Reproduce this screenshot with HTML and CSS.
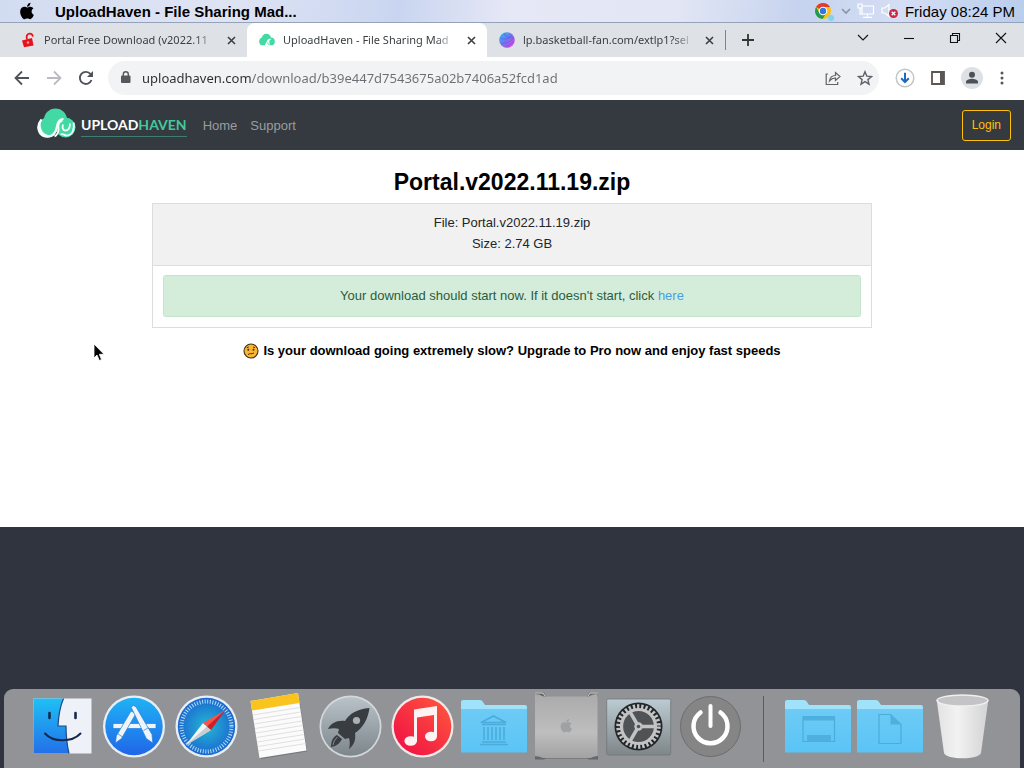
FILE: index.html
```html
<!DOCTYPE html>
<html lang="en">
<head>
<meta charset="utf-8">
<meta name="viewport" content="width=device-width, initial-scale=1">
<title>UploadHaven - File Sharing Made Easy</title>
<link rel="stylesheet" href="styles.css">
</head>
<body>
<header class="menubar">
  <button class="apple" aria-label="System menu"><svg width="14" height="18" viewBox="0 20 384 470"><path d="M318.7 268.7c-.2-36.7 16.4-64.4 50-84.8-18.8-26.9-47.2-41.7-84.7-44.6-35.5-2.8-74.3 20.7-88.5 20.7-15 0-49.4-19.7-76.4-19.7C63.3 141.2 4 184.8 4 273.5q0 39.3 14.4 81.2c12.8 36.7 59 126.7 107.2 125.2 25.2-.6 43-17.9 75.8-17.9 31.8 0 48.3 17.9 76.4 17.9 48.6-.7 90.4-82.5 102.6-119.3-65.2-30.7-61.7-90-61.7-91.9zm-56.6-164.2c27.3-32.4 24.8-61.9 24-72.5-24.1 1.4-52 16.4-67.9 34.9-17.5 19.8-27.8 44.3-25.6 71.9 26.1 2 49.9-11.4 69.5-34.3z"/></svg></button>
  <span class="app-name">UploadHaven - File Sharing Mad...</span>
  <div class="tray">
    <svg width="20" height="20" viewBox="0 0 20 20"><circle cx="8" cy="10" r="8" fill="#fbc116"/><path d="M8 10 1.100 6A8 8 0 0 1 15 6H8z" fill="#e33b2e"/><path d="M1.100 6A8 8 0 0 0 7.600 18l3.800-6-6.800.2z" fill="#229a4f"/><circle cx="8" cy="10" r="4.300" fill="#fff"/><circle cx="8" cy="10" r="3.200" fill="#2f78e0"/><circle cx="16" cy="17" r="3" fill="#7fd3ea"/></svg>
    <svg width="10" height="8" viewBox="0 0 10 8" fill="none" stroke="#8c93a5" stroke-width="1.6"><path d="m1 2 4 4 4-4"/></svg>
    <svg width="18" height="16" viewBox="0 0 18 16" fill="none" stroke="#fff" stroke-width="1.2"><path d="M5 3h11.5v8H5zM10.500 11v3M6 14.300h9M1 1h4v4H1zM3 5v6h2"/></svg>
    <svg width="18" height="16" viewBox="0 0 18 16"><path d="M1 5h3l4-3.500v12L4 10H1z" fill="none" stroke="#fff" stroke-width="1.200"/><circle cx="12.500" cy="10.500" r="4.500" fill="#cc2640"/><path d="m10.700 8.700 3.600 3.600m0-3.600-3.600 3.600" stroke="#fff" stroke-width="1.300"/></svg>
    <time class="clock">Friday 08:24 PM</time>
  </div>
</header>

<div class="tabstrip">
  <div class="tab">
    <svg width="16" height="16" viewBox="0 0 16 16"><path d="M2 8.500 12 6l1.500 7.500L4 15.200z" fill="#e6121c"/><path d="M7 7.500C6 4 7 1.800 9.500 1.600s3.200 1.600 3.400 3" fill="none" stroke="#e6121c" stroke-width="1.800"/><circle cx="8" cy="10.500" r="1.200" fill="#ff9a9a"/></svg>
    <button class="tab-title">Portal Free Download (v2022.11</button>
    <button class="tab-close" aria-label="Close tab"><svg width="9" height="9" viewBox="0 0 9 9"><path d="m1 1 7 7m0-7L1 8"/></svg></button>
  </div>
  <div class="tab active">
    <svg width="16" height="16" viewBox="0 0 39 31"><circle cx="18" cy="12" r="11.500" fill="#42d9a4"/><circle cx="10" cy="19" r="9.500" fill="#42d9a4"/><circle cx="29" cy="19" r="9.500" fill="#42d9a4"/><path d="M15 27c6-1 4-14 11-13-4 2-2 9-1 13" fill="none" stroke="#fff" stroke-width="3"/></svg>
    <button class="tab-title">UploadHaven - File Sharing Mad</button>
    <button class="tab-close" aria-label="Close tab"><svg width="9" height="9" viewBox="0 0 9 9"><path d="m1 1 7 7m0-7L1 8"/></svg></button>
  </div>
  <div class="tab">
    <svg width="16" height="16" viewBox="0 0 16 16"><defs><linearGradient id="ball" x1="0" x2="1" y1="0" y2="1"><stop stop-color="#19c4f4"/><stop offset=".5" stop-color="#7773ee"/><stop offset="1" stop-color="#fc35dc"/></linearGradient></defs><circle cx="8" cy="8" r="7.800" fill="url(#ball)"/><path d="M1 6c5 2 9 1 12-3M2 11c5 1 9-1 13-5M6 15c3-1 6-3 9-6M5 1c0 3 5 5 10 5" fill="none" stroke="#5a58e0" stroke-width=".6"/></svg>
    <button class="tab-title">lp.basketball-fan.com/extlp1?sel</button>
    <button class="tab-close" aria-label="Close tab"><svg width="9" height="9" viewBox="0 0 9 9"><path d="m1 1 7 7m0-7L1 8"/></svg></button>
  </div>
  <span class="tab-rule"></span>
  <button class="new-tab" aria-label="New tab"><svg width="12" height="12" viewBox="0 0 12 12"><path d="M6 0v12M0 6h12" stroke="#333" stroke-width="1.800"/></svg></button>
  <div class="window-controls">
    <button aria-label="Search tabs"><svg width="12" height="12" viewBox="0 0 12 12"><path d="m1 3 5 5 5-5"/></svg></button>
    <button aria-label="Minimize"><svg width="12" height="12" viewBox="0 0 12 12"><path d="M1 6.500h10"/></svg></button>
    <button aria-label="Restore"><svg width="12" height="12" viewBox="0 0 12 12"><path d="M1.500 3.500h7v7h-7zM3.500 3.500v-2h7v7h-2"/></svg></button>
    <button aria-label="Close window"><svg width="12" height="12" viewBox="0 0 12 12"><path d="m1 1 10 10M11 1 1 11"/></svg></button>
  </div>
</div>

<div class="toolbar">
  <button aria-label="Back"><svg width="16" height="16" viewBox="0 0 16 16" fill="none" stroke="#50545a" stroke-width="1.800"><path d="M15 8H2M8 1.500 1.500 8 8 14.500"/></svg></button>
  <button aria-label="Forward"><svg width="16" height="16" viewBox="0 0 16 16" fill="none" stroke="#b9bbbe" stroke-width="1.800"><path d="M1 8h13M8 1.500 14.500 8 8 14.500"/></svg></button>
  <button aria-label="Reload"><svg width="16" height="16" viewBox="0 0 16 16"><path d="M13.500 10A6 6 0 1 1 12.600 4.200L14 5.700" fill="none" stroke="#50545a" stroke-width="1.900"/><path d="M15 1v6H9z" fill="#50545a"/></svg></button>
  <div class="omnibox">
    <svg width="10" height="13" viewBox="0 0 10 13"><rect y="4.500" width="9.500" height="7.500" rx="1" fill="#55585d"/><path d="M2.300 5V3.300a2.500 2.500 0 0 1 5 0V5" fill="none" stroke="#55585d" stroke-width="1.400"/></svg>
    <input class="url" type="text" aria-label="Address" value="uploadhaven.com/download/b39e447d7543675a02b7406a52fcd1ad">
    <button aria-label="Share"><svg width="16" height="16" viewBox="0 0 16 16" fill="none" stroke="#5f6368" stroke-width="1.200"><path d="M3 4H1.200v10.500h11.500V12M4.500 11c.5-4 2.500-5.500 6-5.500V2.500L15 6.500l-4.500 4V8c-2.800 0-4.500 1-6 3z"/></svg></button>
    <button aria-label="Bookmark"><svg width="16" height="16" viewBox="0 0 16 16" fill="none" stroke="#5f6368" stroke-width="1.400"><path d="m8 1.700 1.800 4.400 4.700.4-3.600 3.100 1.100 4.600L8 11.700l-4 2.500 1.100-4.600-3.600-3.100 4.700-.4z"/></svg></button>
  </div>
  <button aria-label="Downloads"><svg width="20" height="20" viewBox="0 0 20 20"><circle cx="10" cy="10" r="8.800" fill="#fff" stroke="#c3c5c9" stroke-width="1.500"/><path d="M10 4.800v9M6.200 10.200 10 14l3.800-3.800" fill="none" stroke="#2167be" stroke-width="2"/></svg></button>
  <button aria-label="Side panel"><svg width="14" height="14" viewBox="0 0 14 14"><path d="M1 1h12v12H1z" fill="none" stroke="#5b5653" stroke-width="1.800"/><path d="M9 1h4v12H9z" fill="#5b5653"/></svg></button>
  <button aria-label="Profile"><svg width="22" height="22" viewBox="0 0 22 22"><circle cx="11" cy="11" r="11" fill="#dde1e6"/><circle cx="11" cy="7.700" r="3" fill="#4d5258"/><path d="M5 16.500v-1.700c0-2 4-3 6-3s6 1 6 3v1.700z" fill="#4d5258"/></svg></button>
  <button aria-label="Browser menu"><svg width="6" height="14" viewBox="0 0 6 14" fill="#5b5653"><circle cx="3" cy="2" r="1.500"/><circle cx="3" cy="7" r="1.500"/><circle cx="3" cy="12" r="1.500"/></svg></button>
</div>

<nav class="site-nav">
  <a class="brand" href="#">
    <svg width="39" height="31" viewBox="0 0 39 31"><circle cx="18.500" cy="12" r="11.500" fill="#42d9a4"/><circle cx="10.500" cy="19.500" r="10" fill="#42d9a4"/><circle cx="28.500" cy="19.500" r="10" fill="#42d9a4"/><path d="M4.500 11.500C-1 18 1 28.500 10.500 28.500c7.500 0 9-7 9.500-10 .6-4 2-7.500 6.500-7.500" fill="none" stroke="#f4fffb" stroke-width="2.200"/><path d="M4.500 11.500C-2 17 0 29.500 10.500 29.500c4 0 6-1.500 7.500-3.500-9 4-17-3-13.500-14.500z" fill="#f4fffb"/><path d="M25.500 12.500c-4 1.500-4.500 5-4 8 .4 3-1 6-4 8M26 16.500c-.8 3-.5 6 2.500 6s4.500-2.500 4.500-7M36.500 14.500c1.500 7-1.500 13-7 13-3 0-3-2.500-6-1" fill="none" stroke="#f4fffb" stroke-width="1.800"/></svg>
    <span class="wordmark">UPLOAD<span class="haven">HAVEN</span></span>
  </a>
  <a class="nav-link" href="#">Home</a>
  <a class="nav-link" href="#">Support</a>
  <a class="login" href="#">Login</a>
</nav>

<main class="page">
  <h1>Portal.v2022.11.19.zip</h1>
  <section class="card">
    <div class="card-head">
      <div>File: Portal.v2022.11.19.zip</div>
      <div>Size: 2.74 GB</div>
    </div>
    <div class="card-body">
      <div class="alert">Your download should start now. If it doesn't start, click <a href="#">here</a></div>
    </div>
  </section>
  <p class="upsell">
    <svg width="16" height="16" viewBox="0 0 16 16"><circle cx="8" cy="8" r="7" fill="#fbb62e" stroke="#40301b" stroke-width="1.100"/><circle cx="5.300" cy="6.800" r="1" fill="#40301b"/><circle cx="10.500" cy="6.800" r="1" fill="#40301b"/><path d="M5 11.700c1.500-2 3.500-.2 6-1.700M3.800 4.700l2-.7M10 4l2 .7" fill="none" stroke="#40301b"/></svg>
    Is your download going extremely slow? Upgrade to Pro now and enjoy fast speeds
  </p>
</main>

<section class="desktop">
  <div class="dock">
    <button aria-label="Finder"><svg viewBox="0 0 72 79"><defs><linearGradient id="fin" x2="0" y2="1"><stop stop-color="#1fc0f5"/><stop offset="1" stop-color="#2270e8"/></linearGradient></defs><path d="M7.500 9.500h58v55h-58z" fill="#eef2f8"/><path d="M7.500 9.500h30c-3 7-5 17-5.500 27.500h8c0 9 1 19 3 27.500H7.500z" fill="url(#fin)"/><path d="M37.500 9.500c-3 7-5 17-5.500 27.500h8c0 9 1 19 3 27.500" fill="none" stroke="#1b4a86" stroke-width="1.200"/><path d="M23.500 24v5M49.500 24v5" stroke="#14284a" stroke-width="2.600" stroke-linecap="round"/><path d="M19 44.500c8 9 27 9 35.500 0" fill="none" stroke="#14284a" stroke-width="2" stroke-linecap="round"/></svg></button>
    <button aria-label="App Store"><svg viewBox="0 0 72 79"><defs><linearGradient id="app" x2="0" y2="1"><stop stop-color="#1fb2f5"/><stop offset="1" stop-color="#2066e8"/></linearGradient></defs><circle cx="36" cy="37.500" r="31" fill="#e8eef5"/><circle cx="36" cy="37.500" r="28.700" fill="url(#app)"/><g fill="#eef4fa" stroke="#1c7fdc" stroke-width=".7"><path d="M15 34.500h43v5H15z"/><path d="m33 22 5 2.500-14.500 25-6 4.500.8-7z"/><path d="m33 18 2.500-1.500 2.500 1.300 16 27.700.8 8.500-6.500-4.500z"/><path d="m45.500 41.500 5-2.800M20 45l4.700 3"/></g></svg></button>
    <button aria-label="Safari"><svg viewBox="0 0 72 79"><defs><radialGradient id="saf"><stop stop-color="#24b8d4"/><stop offset="1" stop-color="#1b68cf"/></radialGradient></defs><circle cx="36.500" cy="37.500" r="31" fill="#e8eef5"/><circle cx="36.500" cy="37.500" r="28.700" fill="url(#saf)"/><circle cx="36.500" cy="37.500" r="25" fill="none" stroke="#b5dcf5" stroke-width="4" stroke-dasharray="1 1.618"/><path d="M15.500 56.500 33 34l8 7z" fill="#f2f4f6"/><path d="M15.500 56.500 41 41l-4-3.500z" fill="#c8cdd2"/><path d="M55.500 21 33 34l4 3.500z" fill="#ff5147"/><path d="M55.500 21 41 41l-4-3.500z" fill="#cf2025"/></svg></button>
    <button aria-label="Notes"><svg viewBox="0 0 72 79"><path d="m11 22 8 48L65 62.500 58 14z" fill="#77787b"/><path d="m8.500 12 47.500-8 8.500 57.500-47 7.500z" fill="#fbfbfb"/><path d="m8.500 12 47.500-8 1.500 10-47.500 7.500z" fill="#f9c41e"/><path d="m11 26 47-7.500m-46.300 12 47-7.500m-46.400 12 47-7.500m-46.300 12 47-7.500m-46.200 12 47-7.500m-46.300 12 47-7.500m-46.300 12 47-7.500m-46.200 12 47-7.500m-46.300 12 47-7.500" stroke="#dcdcde" stroke-width=".9"/></svg></button>
    <button aria-label="Launchpad"><svg viewBox="0 0 72 79"><defs><linearGradient id="roc" x2="0" y2="1"><stop stop-color="#b8c2c8"/><stop offset="1" stop-color="#7d868b"/></linearGradient></defs><circle cx="36.500" cy="37.500" r="31" fill="#d3d8da"/><circle cx="36.500" cy="37.500" r="29.300" fill="url(#roc)"/><path d="M55.500 19C43 20 35 25 31 32c-8-1-14 2-17 8 4-1 8-1 11 0l-1 4 7 6 4-1c1 4 1 7 0 11 5-4 7-9 6-16 8-5 13-14 14.500-25z" fill="#393d42"/><path d="M23 46c-4 2-6 6-6 12 6-1 9-4 11-8z" fill="#393d42"/><path d="M23.500 48c-3 3-4 5-4.500 8" stroke="#899196" fill="none"/><circle cx="42.500" cy="31.500" r="3.600" fill="#a9b1b5"/></svg></button>
    <button aria-label="Music"><svg viewBox="0 0 72 79"><defs><linearGradient id="mus" x1="1" x2="0" y2="1"><stop stop-color="#ff5a3c"/><stop offset="1" stop-color="#ef0b46"/></linearGradient></defs><circle cx="36.500" cy="37.500" r="31" fill="#f1e9e9"/><circle cx="36.500" cy="37.500" r="28.800" fill="url(#mus)"/><path d="M28 20.500 51 17v30h-3V26l-17 2.500V52h-3z" fill="#fff2f2"/><ellipse cx="24.700" cy="52" rx="6.300" ry="4.800" fill="#fff2f2"/><ellipse cx="45" cy="47.500" rx="6" ry="4.800" fill="#fff2f2"/></svg></button>
    <button aria-label="Library"><svg viewBox="0 0 72 79"><defs><linearGradient id="fold" x2="0" y2="1"><stop stop-color="#6dcbf5"/><stop offset="1" stop-color="#5bc4f6"/></linearGradient></defs><path id="folder-back" d="M3 13q0-2 2-2h17q2 0 3 2l2 3h40q2 0 2 2v45H3z" fill="#9fe2fa"/><path id="folder-front" d="M3 20h66v43.500H3z" fill="url(#fold)"/><g fill="none" stroke="#4bacdc" stroke-width="1.600"><path d="M23 33.500 35.500 27 48 33.500zM24 35.500h24M26 38v13M30 38v13M34 38v13M38 38v13M42 38v13M46 38v13M24 53h24M22 55.500h28"/></g></svg></button>
    <button aria-label="This Mac"><svg viewBox="0 0 72 79"><defs><linearGradient id="mac" x2="0" y2="1"><stop stop-color="#aaaaab"/><stop offset=".6" stop-color="#bebebf"/><stop offset="1" stop-color="#a2a2a3"/></linearGradient></defs><path d="M5 3.500h9l2 4h41l2-4h9v4H5zM5 67h63v3.500h-9l-2-1H16l-2 1H5z" fill="#66676a"/><path d="M5 5q5 0 8 2.500h46Q62 5 67.500 5v62q-4 .5-7 2H13q-3-1.500-8-2z" fill="url(#mac)"/><path d="M5 4h8l2 3M68 4h-8l-2 3" fill="none" stroke="#d0d0d1"/><path transform="translate(30.500 29) scale(.03)" d="M318.700 268.700c-.2-36.700 16.400-64.400 50-84.800-18.800-26.900-47.200-41.700-84.700-44.600-35.500-2.800-74.300 20.700-88.500 20.700-15 0-49.400-19.700-76.400-19.700C63.300 141.200 4 184.800 4 273.500q0 39.300 14.400 81.200c12.800 36.700 59 126.700 107.200 125.200 25.200-.6 43-17.900 75.800-17.900 31.800 0 48.300 17.900 76.400 17.900 48.600-.7 90.400-82.500 102.600-119.300-65.200-30.700-61.700-90-61.700-91.900zm-56.600-164.200c27.300-32.400 24.800-61.900 24-72.500-24.100 1.400-52 16.400-67.900 34.900-17.500 19.800-27.800 44.300-25.600 71.900 26.100 2 49.900-11.400 69.500-34.300z" fill="#a0a1a3"/></svg></button>
    <button aria-label="System Preferences"><svg viewBox="0 0 72 79"><defs><linearGradient id="set" x2="0" y2="1"><stop stop-color="#bccbd2"/><stop offset="1" stop-color="#7f8689"/></linearGradient></defs><rect x="4.700" y="10" width="64" height="56" rx="1.500" fill="url(#set)" stroke="#717679" stroke-width=".8"/><circle cx="36.500" cy="37.500" r="24" fill="#24272a"/><circle cx="36.500" cy="37.500" r="20" fill="none" stroke="#c1c3c4" stroke-width="4.500" stroke-dasharray="2.300 1.890"/><circle cx="36.500" cy="37.500" r="17" fill="#505356" stroke="#c1c3c4" stroke-width="3.200"/><path d="M36.500 37.500h17M36.500 37.500 28 22.800M36.500 37.500 28 52.200" stroke="#c1c3c4" stroke-width="3.500"/><circle cx="36.500" cy="37.500" r="4.200" fill="#c1c3c4"/><circle cx="36.500" cy="37.500" r="1.800" fill="#505356"/></svg></button>
    <button aria-label="Shut down"><svg viewBox="0 0 72 79"><circle cx="36.500" cy="37.500" r="30" fill="#858586" stroke="#6d6d70"/><path d="M26.500 23.500a17 17 0 1 0 20 0" fill="none" stroke="#fff" stroke-width="4.500" stroke-linecap="round"/><path d="M36.500 17v20" stroke="#fff" stroke-width="4" stroke-linecap="round"/></svg></button>
    <span class="dock-rule"></span>
    <button aria-label="Desktop folder"><svg viewBox="0 0 72 79"><use href="#folder-back"/><use href="#folder-front"/><path d="M21 27.500h31.500v25H21z" fill="none" stroke="#4bacdc" stroke-width="1.200"/><path d="M21 27.500h31.500v4H21zM25 46h24v6.500H25z" fill="#4fafdf"/></svg></button>
    <button aria-label="Documents folder"><svg viewBox="0 0 72 79"><use href="#folder-back"/><use href="#folder-front"/><path d="M25 25.500h11.500l10.500 10v19H25z" fill="none" stroke="#4bacdc" stroke-width="1.200"/><path d="M36.500 25.500v10H47z" fill="#4fafdf"/></svg></button>
    <button aria-label="Trash"><svg viewBox="0 0 72 79"><defs><linearGradient id="tra" x2="1" y2="0"><stop stop-color="#e2e2e3"/><stop offset=".4" stop-color="#f2f2f2"/><stop offset="1" stop-color="#d3d3d5"/></linearGradient></defs><path d="M10.700 11 18 64c2 7 35 7 37 0l7.300-53z" fill="url(#tra)"/><ellipse cx="36.500" cy="11.500" rx="25.500" ry="5.500" fill="#c4c4c6" stroke="#f0f0f1" stroke-width="1.500"/></svg></button>
  </div>
</section>

<svg class="pointer" width="12" height="19" viewBox="0 0 12 19"><path d="M1 1v14l3-3 2.300 5.500 2.200-1L6.300 11.300H11z" fill="#000" stroke="#fff" stroke-width=".8"/></svg>
</body>
</html>
```
FILE: styles.css
```css
* { box-sizing: border-box; }

body {
  margin: 0;
  min-height: 100vh;
  display: flex;
  flex-direction: column;
  background: #fff;
  color: #212529;
  font: 13px/21px "Liberation Sans", Arial, sans-serif;
}

button {
  border: 0;
  padding: 0;
  background: none;
  color: inherit;
  font: inherit;
}

svg { display: block; flex: none; }
a { text-decoration: none; }

.menubar {
  display: flex;
  align-items: center;
  height: 23px;
  padding: 0 9px 0 20px;
  border-bottom: 1px solid #96a2ba;
  background: linear-gradient(95deg, #d2dcf0 0%, #dfe4f4 22%, #c9d5f0 39%, #e6e8f6 50%, #e2e6f5 66%, #c6d3ee 78%, #d4def4 88%, #b9cdec 100%);
  color: #000;
}
.app-name {
  margin-left: 21px;
  font-size: 15px;
  font-weight: bold;
}
.tray {
  display: flex;
  align-items: center;
  gap: 6px;
  margin-left: auto;
}
.clock { font-size: 15px; }

.tabstrip {
  display: flex;
  align-items: center;
  height: 34px;
  background: #dee1e6;
  color: #3c4043;
}
.tab {
  display: flex;
  align-items: center;
  flex: 0 1 238px;
  min-width: 0;
  height: 34px;
  padding: 0 10px 0 12px;
}
.tab:first-child { flex-basis: 247px; padding-left: 20px; }
.tab.active {
  flex-basis: 240px;
  border-radius: 8px 8px 0 0;
  background: #fff;
}
.tab-title {
  flex: 1;
  min-width: 0;
  margin: 0 10px 0 8px;
  text-align: left;
  white-space: nowrap;
  font: 11px/20px "Noto Sans", "Open Sans", sans-serif;
  mask-image: linear-gradient(to right, #000 88%, transparent);
}
.tab-close { padding: 1px; }
.tab-close path { stroke: #3c4043; stroke-width: 1.6; }
.tab-rule { width: 1px; height: 20px; background: #808388; }
.new-tab { margin-left: 16px; }
.window-controls { display: flex; gap: 34px; margin: 0 17px 4px auto; }
.window-controls path { fill: none; stroke: #111; stroke-width: 1.1; }

.toolbar {
  display: flex;
  align-items: center;
  height: 43px;
  padding: 0 19px 2px 14px;
  gap: 16px;
  background: #fff;
}
.omnibox {
  display: flex;
  align-items: center;
  gap: 16px;
  flex: 1;
  min-width: 0;
  height: 34px;
  margin-left: -2px;
  padding: 0 6px 0 13px;
  border-radius: 17px;
  background: #f1f3f4;
}
.url {
  flex: 1;
  min-width: 0;
  margin-left: -5px;
  padding: 0;
  border: 0;
  outline: 0;
  font: 13px/20px "Noto Sans", "Open Sans", sans-serif;
  background: linear-gradient(to right, #2b2d30 110px, #6b6f74 110px);
  background-clip: text;
  -webkit-background-clip: text;
  color: transparent;
}

.site-nav {
  display: flex;
  align-items: center;
  height: 50px;
  padding: 0 13px 0 37px;
  background: #343a40;
}
.brand { display: flex; align-items: center; gap: 5px; margin-right: 16px; }
.brand svg { margin-bottom: 4px; }
.wordmark {
  border-bottom: 1px solid #3f7e70;
  color: #fff;
  font: bold 14px/22px Lato, sans-serif;
}
.haven { color: #42c99b; }
.nav-link { margin-right: 13px; color: #9a9d9f; }
.login {
  margin-left: auto;
  padding: 4px 9px;
  border: 1px solid #ffc107;
  border-radius: 3px;
  color: #ffc107;
  font-size: 12px;
}

.page {
  flex: 1;
  padding: 18px 16px 0;
  text-align: center;
}
h1 {
  margin: 0 0 7px;
  color: #000;
  font-size: 23px;
  line-height: 28px;
}
.card {
  max-width: 720px;
  margin: 0 auto;
  border: 1px solid #dcdddf;
}
.card-head {
  padding: 8px 10px 11px;
  border-bottom: 1px solid #dcdddf;
  background: #f1f1f1;
}
.card-body { padding: 9px 10px 10px; }
.alert {
  padding: 10px;
  border: 1px solid #c3e6cb;
  border-radius: 3px;
  background: #d4edda;
  color: #2c5c3a;
  line-height: 20px;
}
.alert a { color: #4a9fe0; }
.upsell {
  display: flex;
  justify-content: center;
  align-items: center;
  gap: 4px;
  margin: 12px 0 0;
  color: #000;
  font-weight: bold;
}

.desktop {
  padding: 162px 4px 0;
  background: #30343f;
}
.dock {
  display: flex;
  justify-content: center;
  align-items: center;
  height: 79px;
  border-radius: 9px 9px 0 0;
  background: #929396;
}
.dock button { flex: 0 1 72px; min-width: 0; }
.dock svg { width: 100%; height: auto; }
.dock-rule {
  width: 1px;
  height: 66px;
  margin: 0 18px 0 17px;
  background: #5c5d61;
}

.pointer { position: absolute; left: 93px; top: 343px; }
```
